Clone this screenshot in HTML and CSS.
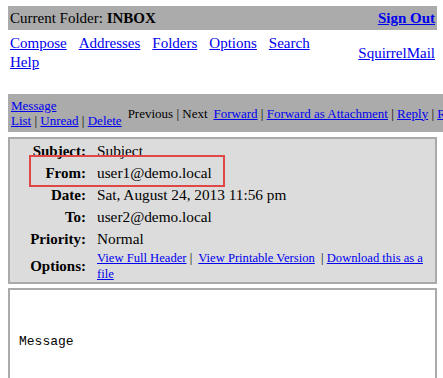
FILE: index.html
```html
<!DOCTYPE html>
<html>
<head>
	<title>SquirrelMail - Read Message</title>
	<meta charset="utf-8"/>
	<link rel="stylesheet" href="styles.css">
</head>
<body>

<div class="page">
	<div class="topbar">
		<span>Current Folder: <b>INBOX</b></span>
		<a class="signout" href="#">Sign Out</a>
	</div>

	<div class="nav">
		<div class="nav-links">
			<a href="#">Compose</a>
			<a href="#">Addresses</a>
			<a href="#">Folders</a>
			<a href="#">Options</a>
			<a href="#">Search</a>
			<a href="#">Help</a>
		</div>
		<a class="brand" href="#">SquirrelMail</a>
	</div>

	<div class="toolbar">
		<div class="cell"><a href="#">Message<br>List</a>&nbsp;|&nbsp;<a href="#">Unread</a>&nbsp;|&nbsp;<a href="#">Delete</a></div>
		<div class="cell">Previous&nbsp;|&nbsp;Next</div>
		<div class="cell"><a href="#">Forward</a>&nbsp;|&nbsp;<a href="#">Forward as Attachment</a>&nbsp;|&nbsp;<a href="#">Reply</a>&nbsp;|&nbsp;<a href="#">Reply All</a></div>
	</div>

	<div class="headers">
		<div class="label">Subject:</div>
		<div class="value">Subject</div>
		<div class="label">From:</div>
		<div class="value">user1@demo.local</div>
		<div class="label">Date:</div>
		<div class="value">Sat, August 24, 2013 11:56 pm</div>
		<div class="label">To:</div>
		<div class="value">user2@demo.local</div>
		<div class="label">Priority:</div>
		<div class="value">Normal</div>
		<div class="label">Options:</div>
		<div class="value options"><a href="#">View Full Header</a>&nbsp;|&nbsp; <a href="#">View Printable Version</a> &nbsp;|&nbsp;<a href="#">Download this as a file</a></div>
		<div class="highlight"></div>
	</div>

	<div class="body">
		<pre>Message</pre>
	</div>
</div>

</body>
</html>
```

FILE: styles.css
```css
* {
	box-sizing: border-box;
}

html {
	overflow: hidden;
}

body {
	margin: 6px 0 0 8px;
	font-family: "Liberation Serif", "Times New Roman", serif;
	font-size: 15px;
	color: black;
	background: white;
}

a {
	color: #0000ee;
}

.page {
	width: 429px;
}

.topbar {
	background: #ababab;
	height: 24px;
	display: flex;
	justify-content: space-between;
	align-items: center;
	padding: 0 2px;
}

.signout {
	font-weight: bold;
}

.nav {
	display: flex;
	justify-content: space-between;
	align-items: center;
	margin-top: 4px;
	padding: 0 2px;
	line-height: 19px;
}

.nav-links {
	width: 330px;
	display: flex;
	flex-wrap: wrap;
	column-gap: 12px;
}

.toolbar {
	background: #ababab;
	margin-top: 22px;
	height: 38px;
	width: 520px;
	display: flex;
	align-items: center;
	gap: 6px;
	padding: 0 3px;
	font-size: 13px;
	line-height: 15px;
	white-space: nowrap;
}

.headers {
	position: relative;
	margin-top: 5px;
	background: #dcdcdc;
	border: 2px solid #aaaaaa;
	padding-top: 1px;
	display: grid;
	grid-template-columns: 76px 1fr;
	grid-template-rows: repeat(5, 22px) 32px;
	column-gap: 11px;
	align-items: center;
}

.label {
	font-weight: bold;
	text-align: right;
}

.value {
	font-size: 15.3px;
}

.options {
	font-size: 12.6px;
	line-height: 16px;
	padding-right: 4px;
}

.highlight {
	position: absolute;
	left: 19px;
	top: 16px;
	width: 196px;
	height: 32px;
	border: 2px solid #e04848;
}

.body {
	margin-top: 4px;
	border: 2px solid #aaaaaa;
	height: 100px;
	padding: 44px 0 0 9px;
}

.body pre {
	margin: 0;
	font-family: "Liberation Mono", "Courier New", monospace;
	font-size: 13px;
}
```
